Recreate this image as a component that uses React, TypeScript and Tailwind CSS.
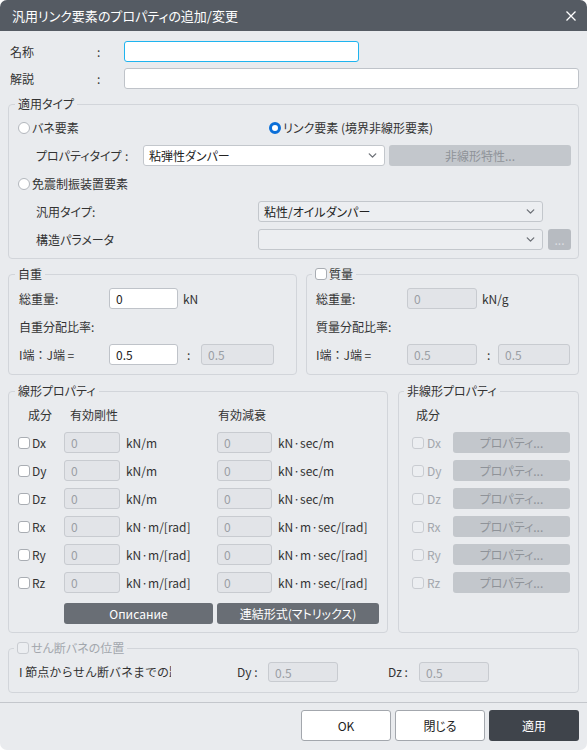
import { ChevronDown } from 'lucide-react';

const font = { fontFamily: '"Noto Sans CJK JP", "Noto Sans", sans-serif' };

const Radio = ({ checked }: { checked?: boolean }) =>
  checked ? (
    <span className="inline-block w-[12px] h-[12px] rounded-full border-[3px] border-[#0b6fd8] bg-white shrink-0" />
  ) : (
    <span className="inline-block w-[12px] h-[12px] rounded-full border border-[#b3b7bd] bg-white shrink-0" />
  );

const Check = ({ disabled }: { disabled?: boolean }) =>
  disabled ? (
    <span className="inline-block w-[12px] h-[12px] rounded-[3px] border border-[#c9ccd1] bg-[#eceef1] shrink-0" />
  ) : (
    <span className="inline-block w-[12px] h-[12px] rounded-[3px] border border-[#a9adb3] bg-white shrink-0" />
  );

const TextBox = ({ value, width, disabled }: { value: string; width: string; disabled?: boolean }) => (
  <input
    readOnly
    defaultValue={value}
    className={
      disabled
        ? `${width} h-[21px] px-[6px] rounded-[3px] border border-[#c8cbd0] bg-[#e2e4e8] text-[#9a9ea4] text-[12px] outline-none`
        : `${width} h-[21px] px-[6px] rounded-[3px] border border-[#bfc3c9] bg-white text-[#222] text-[12px] outline-none`
    }
  />
);

const Select = ({ value, width, bg }: { value: string; width: string; bg: string }) => (
  <div className={`${width} ${bg} h-[21px] flex items-center justify-between pl-[5px] pr-[5px] rounded-[3px] border border-[#c3c7cc]`}>
    <span className="text-[12px] text-[#222]">{value}</span>
    <ChevronDown size={13} strokeWidth={2.5} className="text-[#6d7177]" />
  </div>
);

const Legend = ({ children, ml }: { children: React.ReactNode; ml: string }) => (
  <legend className={`${ml} px-[3px] h-[14px] leading-[14px] text-[12px] flex items-center whitespace-nowrap`}>{children}</legend>
);

const linear = [
  { c: 'Dx', u1: 'kN/m', u2: 'kN·sec/m' },
  { c: 'Dy', u1: 'kN/m', u2: 'kN·sec/m' },
  { c: 'Dz', u1: 'kN/m', u2: 'kN·sec/m' },
  { c: 'Rx', u1: 'kN·m/[rad]', u2: 'kN·m·sec/[rad]' },
  { c: 'Ry', u1: 'kN·m/[rad]', u2: 'kN·m·sec/[rad]' },
  { c: 'Rz', u1: 'kN·m/[rad]', u2: 'kN·m·sec/[rad]' },
];

export default function App() {
  return (
    <div className="w-[587px] h-[750px] bg-white [font-feature-settings:'palt']" style={font}>
      <div className="w-[587px] h-[750px] rounded-[7px] overflow-hidden bg-[#e9ebee] flex flex-col text-[12px] text-[#333] leading-[16px] whitespace-nowrap">
        {/* title bar */}
        <div className="h-[31px] shrink-0 bg-[#555b63] flex items-center justify-between pl-[12px] pr-[11px]">
          <span className="text-white text-[13px] font-normal">汎用リンク要素のプロパティの追加/変更</span>
          <svg width="10" height="10" viewBox="0 0 10 10">
            <path d="M0.5 0.5 L9.5 9.5 M9.5 0.5 L0.5 9.5" stroke="white" strokeWidth="1.3" />
          </svg>
        </div>

        <div className="px-[8px] pt-[10px] flex flex-col">
          <div className="flex items-center h-[21px]">
            <span className="w-[89px] pl-[2px]">名称</span>
            <span className="w-[27px]">:</span>
            <input
              readOnly
              className="w-[235px] h-[21px] rounded-[3px] border border-[#1fb4ef] bg-white outline-none"
            />
          </div>
          <div className="flex items-center h-[21px] mt-[6px]">
            <span className="w-[89px] pl-[2px]">解説</span>
            <span className="w-[27px]">:</span>
            <input
              readOnly
              className="flex-1 h-[21px] rounded-[3px] border border-[#bfc3c9] bg-white outline-none"
            />
          </div>

          {/* 適用タイプ */}
          <fieldset className="mt-[8px] border border-[#d2d5da] rounded-[4px]">
            <Legend ml="ml-[6px]">適用タイプ</Legend>
            <div className="pl-[9px] pt-[6px] pb-[8px] flex flex-col gap-[7px]">
              <div className="h-[21px] flex items-center">
                <div className="w-[251px] flex items-center gap-[2px]">
                  <Radio />
                  <span>バネ要素</span>
                </div>
                <div className="flex items-center gap-[2px]">
                  <Radio checked />
                  <span>リンク要素 (境界非線形要素)</span>
                </div>
              </div>
              <div className="h-[21px] flex items-center">
                <span className="ml-[18px] w-[89px] shrink-0">プロパティタイプ</span>
                <span className="w-[18px] shrink-0">:</span>
                <Select value="粘弾性ダンパー" width="w-[242px]" bg="bg-white" />
                <div className="ml-[4px] w-[182px] h-[21px] rounded-[3px] bg-[#c3c7cc] text-[#8f9399] flex items-center justify-center">
                  非線形特性...
                </div>
              </div>
              <div className="h-[21px] flex items-center gap-[2px]">
                <Radio />
                <span>免震制振装置要素</span>
              </div>
              <div className="h-[21px] flex items-center">
                <span className="ml-[18px] w-[222px]">汎用タイプ:</span>
                <Select value="粘性/オイルダンパー" width="w-[285px]" bg="bg-[#eceef1]" />
              </div>
              <div className="h-[21px] flex items-center">
                <span className="ml-[18px] w-[222px]">構造パラメータ</span>
                <Select value="" width="w-[285px]" bg="bg-[#eceef1]" />
                <div className="ml-[5px] w-[23px] h-[21px] rounded-[3px] bg-[#b7bbc1] text-[#dcdee1] flex items-center justify-center leading-[10px]">
                  ...
                </div>
              </div>
            </div>
          </fieldset>

          {/* 自重 / 質量 */}
          <div className="mt-[8px] flex gap-[9px]">
            <fieldset className="w-[289px] border border-[#d2d5da] rounded-[4px]">
              <Legend ml="ml-[6px]">自重</Legend>
              <div className="pl-[10px] pt-[7px] pb-[9px] flex flex-col gap-[7px]">
                <div className="h-[21px] flex items-center">
                  <span className="w-[90px]">総重量:</span>
                  <TextBox value="0" width="w-[69px]" />
                  <span className="ml-[5px]">kN</span>
                </div>
                <div className="h-[21px] flex items-center">自重分配比率:</div>
                <div className="h-[21px] flex items-center">
                  <span className="w-[90px] [font-feature-settings:normal]">I端：J端 =</span>
                  <TextBox value="0.5" width="w-[69px]" />
                  <span className="w-[23px] pl-[9px]">:</span>
                  <TextBox value="0.5" width="w-[73px]" disabled />
                </div>
              </div>
            </fieldset>
            <fieldset className="flex-1 border border-[#d2d5da] rounded-[4px]">
              <Legend ml="ml-[5px]">
                <Check />
                <span className="ml-[2px]">質量</span>
              </Legend>
              <div className="pl-[9px] pt-[7px] pb-[9px] flex flex-col gap-[7px]">
                <div className="h-[21px] flex items-center">
                  <span className="w-[91px]">総重量:</span>
                  <TextBox value="0" width="w-[70px]" disabled />
                  <span className="ml-[5px]">kN/g</span>
                </div>
                <div className="h-[21px] flex items-center">質量分配比率:</div>
                <div className="h-[21px] flex items-center">
                  <span className="w-[91px] [font-feature-settings:normal]">I端：J端 =</span>
                  <TextBox value="0.5" width="w-[70px]" disabled />
                  <span className="w-[21px] pl-[10px]">:</span>
                  <TextBox value="0.5" width="w-[72px]" disabled />
                </div>
              </div>
            </fieldset>
          </div>

          {/* 線形 / 非線形 */}
          <div className="mt-[9px] flex gap-[10px]">
            <fieldset className="w-[380px] border border-[#d2d5da] rounded-[4px]">
              <Legend ml="ml-[6px]">線形プロパティ</Legend>
              <div className="pl-[9px] pt-[6px] pb-[8px] flex flex-col">
                <div className="h-[21px] flex items-center">
                  <span className="w-[52px] pl-[10px]">成分</span>
                  <span className="w-[148px]">有効剛性</span>
                  <span>有効減衰</span>
                </div>
                {linear.map((r) => (
                  <div key={r.c} className="mt-[7px] h-[21px] flex items-center">
                    <div className="w-[46px] flex items-center gap-[2px]">
                      <Check />
                      <span>{r.c}</span>
                    </div>
                    <TextBox value="0" width="w-[56px]" disabled />
                    <span className="w-[97px] pl-[6px]">{r.u1}</span>
                    <TextBox value="0" width="w-[55px]" disabled />
                    <span className="pl-[6px]">{r.u2}</span>
                  </div>
                ))}
                <div className="mt-[10px] h-[21px] flex items-center gap-[4px] ml-[46px]">
                  <div className="w-[149px] h-[21px] rounded-[3px] bg-[#696e75] text-white flex items-center justify-center">
                    Описание
                  </div>
                  <div className="w-[162px] h-[21px] rounded-[3px] bg-[#696e75] text-white flex items-center justify-center">
                    連結形式(マトリックス)
                  </div>
                </div>
              </div>
            </fieldset>
            <fieldset className="flex-1 border border-[#d2d5da] rounded-[4px]">
              <Legend ml="ml-[5px]">非線形プロパティ</Legend>
              <div className="pl-[13px] pt-[6px] flex flex-col">
                <div className="h-[21px] flex items-center">
                  <span className="pl-[4px]">成分</span>
                </div>
                {linear.map((r) => (
                  <div key={r.c} className="mt-[7px] h-[21px] flex items-center">
                    <div className="w-[41px] flex items-center gap-[3px] text-[#a3a7ad]">
                      <Check disabled />
                      <span>{r.c}</span>
                    </div>
                    <div className="w-[117px] h-[21px] rounded-[3px] bg-[#c3c7cc] text-[#8f9399] flex items-center justify-center">
                      プロパティ...
                    </div>
                  </div>
                ))}
              </div>
            </fieldset>
          </div>

          {/* せん断バネの位置 */}
          <fieldset className="mt-[8px] border border-[#d2d5da] rounded-[4px]">
            <Legend ml="ml-[5px]">
              <Check disabled />
              <span className="ml-[2px] text-[#a3a7ad]">せん断バネの位置</span>
            </Legend>
            <div className="pl-[10px] pt-[7px] pb-[10px] h-[20px] box-content flex items-center">
              <span className="w-[218px]">
                <span className="block w-[152px] overflow-hidden [font-feature-settings:normal]">I 節点からせん断バネまでの距離</span>
              </span>
              <span className="w-[31px]">Dy :</span>
              <TextBox value="0.5" width="w-[70px] !h-[20px]" disabled />
              <span className="ml-[50px] w-[31px]">Dz :</span>
              <TextBox value="0.5" width="w-[70px] !h-[20px]" disabled />
            </div>
          </fieldset>
        </div>

        {/* footer */}
        <div className="mt-[9px] h-px bg-[#c4c7cc]" />
        <div className="mt-[7px] pr-[8px] flex justify-end gap-[4px]">
          <div className="w-[90px] h-[31px] rounded-[3px] border border-[#a3a7ad] bg-white text-[#222] flex items-center justify-center">
            OK
          </div>
          <div className="w-[90px] h-[31px] rounded-[3px] border border-[#a3a7ad] bg-white text-[#222] flex items-center justify-center">
            閉じる
          </div>
          <div className="w-[90px] h-[31px] rounded-[3px] bg-[#3f444b] text-white flex items-center justify-center">
            適用
          </div>
        </div>
      </div>
    </div>
  );
}
